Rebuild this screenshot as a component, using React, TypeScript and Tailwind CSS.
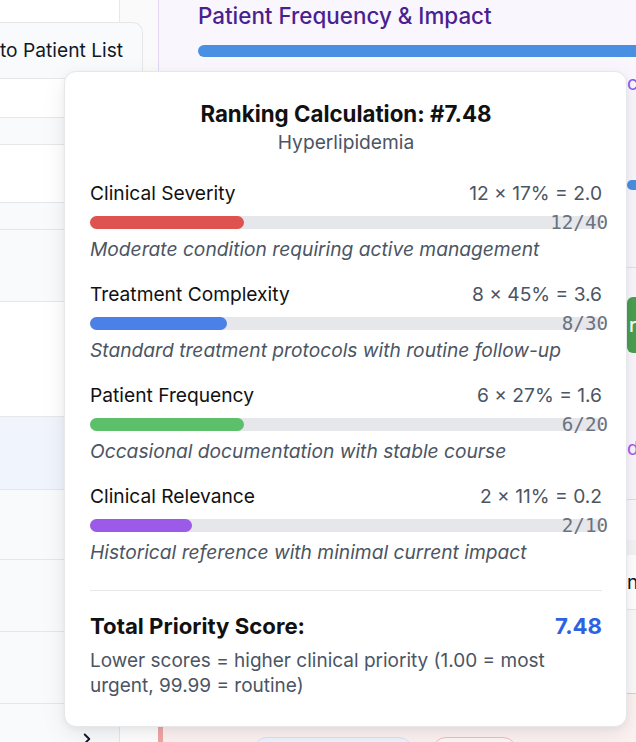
import { ChevronRight } from "lucide-react";

type Factor = {
  label: string;
  calc: string;
  frac: string;
  pct: number;
  color: string;
  desc: string;
};

const factors: Factor[] = [
  {
    label: "Clinical Severity",
    calc: "12 × 17% = 2.0",
    frac: "12/40",
    pct: 30,
    color: "bg-[#de5250]",
    desc: "Moderate condition requiring active management",
  },
  {
    label: "Treatment Complexity",
    calc: "8 × 45% = 3.6",
    frac: "8/30",
    pct: (8 / 30) * 100,
    color: "bg-[#4b80e8]",
    desc: "Standard treatment protocols with routine follow-up",
  },
  {
    label: "Patient Frequency",
    calc: "6 × 27% = 1.6",
    frac: "6/20",
    pct: 30,
    color: "bg-[#5cc06b]",
    desc: "Occasional documentation with stable course",
  },
  {
    label: "Clinical Relevance",
    calc: "2 × 11% = 0.2",
    frac: "2/10",
    pct: 20,
    color: "bg-[#9b5ae8]",
    desc: "Historical reference with minimal current impact",
  },
];

// left list rows behind the popover (height includes bottom border)
const rows = [
  { h: "h-[39px]", bg: "bg-white" },
  { h: "h-[27px]", bg: "bg-[#f9fafb]" },
  { h: "h-[58px]", bg: "bg-white" },
  { h: "h-[27px]", bg: "bg-[#f9fafb]" },
  { h: "h-[72px]", bg: "bg-[#f9fafb]" },
  { h: "h-[115px]", bg: "bg-white" },
  { h: "h-[73px]", bg: "bg-[#eff4fd]" },
  { h: "h-[70px]", bg: "bg-[#f9fafb]" },
  { h: "h-[72px]", bg: "bg-[#f9fafb]" },
  { h: "h-[72px]", bg: "bg-[#f9fafb]" },
];

function FactorRow({ f }: { f: Factor }) {
  return (
    <div>
      <div className="flex h-[28px] items-center justify-between text-[19.2px]">
        <span className="text-[#111111]">{f.label}</span>
        <span className="text-[#4b5563]">{f.calc}</span>
      </div>
      <div className="relative mt-[9px] h-[13px] rounded-full bg-[#e5e7eb]">
        <div className={`h-full rounded-full ${f.color}`} style={{ width: `${f.pct}%` }} />
        <span className="absolute right-[-6px] top-1/2 -translate-y-1/2 font-['DejaVu_Sans_Mono',monospace] text-[19.2px] leading-none text-[#6b7280]">
          {f.frac}
        </span>
      </div>
      <p className="mt-[6px] h-[29px] text-[19.2px] italic leading-[29px] text-[#4b5563]">{f.desc}</p>
    </div>
  );
}

export default function App() {
  return (
    <div className="relative flex h-[742px] w-[636px] overflow-hidden bg-white font-['Inter',sans-serif]">
      {/* sidebar */}
      <div className="flex h-full w-[158px] shrink-0 flex-col overflow-hidden bg-[#fafafa]">
        <div className="flex h-[22px] shrink-0">
          <div className="w-[120px] border-r border-[#e5e7eb] bg-white" />
        </div>
        <div className="h-[57px] shrink-0">
          <div className="flex h-full w-[143px] items-center whitespace-nowrap rounded-tr-[10px] border border-l-0 border-[#e5e7eb] bg-[#f9fafb] text-[19.2px] text-[#111827]">
            to Patient List
          </div>
        </div>
        <div className="flex shrink-0">
          <div className="flex w-[120px] flex-col border-r border-[#e5e7eb]">
            {rows.map((r, i) => (
              <div key={i} className={`${r.h} ${r.bg} shrink-0 border-b border-[#e5e7eb]`} />
            ))}
            <div className="flex h-[60px] shrink-0 bg-[#f9fafb] pl-[78px] pt-[26px]">
              <ChevronRight size={18} strokeWidth={2.5} className="text-[#111827]" />
            </div>
          </div>
          <div className="flex-1 bg-white" />
        </div>
      </div>

      {/* main panel */}
      <div className="flex h-full w-[720px] shrink-0 flex-col overflow-hidden">
        <div className="h-[500px] shrink-0 border-b border-l border-[#e2d8f6] bg-[#f9f6fe] pl-[39px]">
          <h2 className="pt-[2px] text-[22.4px] font-medium leading-[28px] text-[#4c1f8f]">
            Patient Frequency &amp; Impact
          </h2>
          <div className="mt-[15px] h-[12px] w-[620px] rounded-full bg-[#4a90e2]" />
          <div className="flex">
            <div className="w-[429px] shrink-0" />
            <div className="flex w-[200px] flex-col">
              <span className="mt-[12px] text-[19.2px] leading-[28px] text-[#8b5cf6]">clinical</span>
              <div className="mt-[83px] h-[10px] w-[120px] rounded-full bg-[#4a90e2]" />
              <div className="mt-[77px] border-t border-[#e4dcf3]" />
              <div className="mt-[29px] flex h-[56px] items-center rounded-md bg-[#4a9f51] pl-[2px] text-[19.2px] font-medium text-white">
                review
              </div>
              <span className="mt-[81px] text-[19.2px] leading-[28px] text-[#a855f7]">details</span>
            </div>
          </div>
        </div>
        <div className="h-[40px] shrink-0 bg-[#faf8fd]" />
        <div className="h-[15px] shrink-0 bg-[#f3f4f6]" />
        <div className="flex h-[55px] shrink-0 items-center border-b border-[#e5e7eb] bg-white pl-[469px] text-[19.2px] text-[#111827]">
          notes
        </div>
        <div className="h-[83px] shrink-0 bg-[#fafafa]" />
        <div className="flex h-[120px] shrink-0 gap-[19px] border-l-[5px] border-t border-l-[#f0a6a6] border-t-[#f5c4c4] bg-[#fdf2f2] pl-[90px] pt-[43px]">
          <div className="h-[40px] w-[160px] rounded-[14px] border border-[#d5e3f7] bg-[#eef4fd]" />
          <div className="h-[40px] w-[85px] rounded-[14px] border border-[#f3bcbc] bg-[#fff7f7]" />
        </div>
      </div>

      {/* ranking popover */}
      <div className="absolute left-[64px] top-[71px] w-[563px] rounded-[12px] border border-[#e5e7eb] bg-white pb-[28px] pl-[25px] pr-[24px] pt-[27px] shadow-[0_8px_24px_rgba(0,0,0,0.08),0_2px_6px_rgba(0,0,0,0.05)]">
        <div className="text-center">
          <h3 className="text-[22.3px] font-bold leading-[29px] text-[#111111]">Ranking Calculation: #7.48</h3>
          <p className="text-[19.2px] leading-[28px] text-[#4b5563]">Hyperlipidemia</p>
        </div>
        <div className="mt-[23px] flex flex-col gap-[16px]">
          {factors.map((f) => (
            <FactorRow key={f.label} f={f} />
          ))}
        </div>
        <div className="mt-[23px] border-t border-[#e5e7eb] pt-[19px]">
          <div className="flex h-[32px] items-center justify-between text-[22.2px] font-bold">
            <span className="text-[#111111]">Total Priority Score:</span>
            <span className="text-[#2f62e3]">7.48</span>
          </div>
          <p className="mt-[6px] text-[19px] leading-[25px] text-[#4b5563]">
            Lower scores = higher clinical priority (1.00 = most urgent, 99.99 = routine)
          </p>
        </div>
      </div>
    </div>
  );
}
